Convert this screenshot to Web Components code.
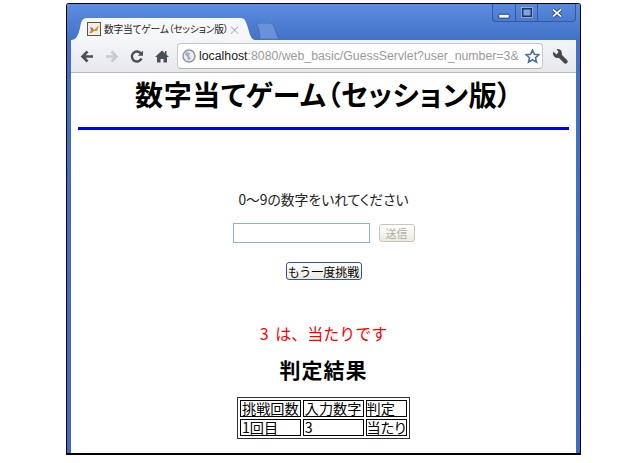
<!DOCTYPE html>
<html lang="ja">
<head>
<meta charset="utf-8">
<title>数字当てゲーム</title>
<style>
html, body { margin: 0; padding: 0; background: #fff; height: 463px; overflow: hidden; }
body { font-family: "Liberation Sans", "Noto Sans CJK JP", sans-serif; }
</style>
</head>
<body>
<browser-window>
	<browser-tabs slot="tabs" tabtitle="数字当てゲーム（セッション版）"></browser-tabs>
	<browser-toolbar slot="toolbar" host-name="localhost" rest=":8080/web_basic/GuessServlet?user_number=3&"></browser-toolbar>
	<guess-page></guess-page>
</browser-window>

<template id="window-tpl">
	<style>
		:host { display: block; box-sizing: border-box; width: 515px; height: 452px; margin: 3px 0 0 66px;
			border: 1px solid #000; border-bottom-width: 2px; border-radius: 3px 3px 0 0; position: relative; overflow: hidden; }
		.frame { display: flex; flex-direction: column; height: 100%; padding: 0 4px; box-sizing: border-box;
			background: linear-gradient(#5c8de0 0, #4072c8 36px, #3d6cc0 100%); }
		.content { flex: 1; background: #fff; min-height: 0; }
		.caption { position: absolute; top: 0; right: 4px; display: flex; height: 17px; border: 1px solid #33589c; border-top: 0; border-radius: 0 0 4px 4px; background: linear-gradient(#5a8ade, #4a7bd0); }
		.caption span { display: flex; align-items: center; justify-content: center; border-left: 1px solid #33589c; }
		.caption span:first-child { border-left: 0; }
		.caption .a { width: 22px; } .caption .b { width: 21px; } .caption .c { width: 37px; }
	</style>
	<div class="frame">
		<slot name="tabs"></slot>
		<slot name="toolbar"></slot>
		<div class="content"><slot></slot></div>
	</div>
	<div class="caption">
		<span class="a"><svg width="12" height="12"><rect x=".7" y="7.200" width="10.600" height="4" rx="1.200" fill="#f2f5fb" stroke="#243f70"/></svg></span>
		<span class="b"><svg width="12" height="11"><rect x="1.500" y="1.500" width="9" height="8" fill="#7ea4e4" stroke="#20365e" stroke-width="2"/><rect x=".5" y=".5" width="11" height="10" fill="none" stroke="#cfdcf2" stroke-width=".6"/></svg></span>
		<span class="c"><svg width="12" height="10"><path d="M2 1.500l8 7M10 1.500l-8 7" stroke="#20365e" stroke-width="3.400"/><path d="M2 1.500l8 7M10 1.500l-8 7" stroke="#f2f5fb" stroke-width="1.800"/></svg></span>
	</div>
</template>

<template id="tabs-tpl">
	<style>
		:host { display: flex; align-items: flex-end; height: 36px; box-sizing: border-box; }
		.tab { position: relative; display: flex; align-items: center; width: 184px; height: 22px; padding: 0 15px 0 16px; box-sizing: border-box;
			font: 9.700px "Noto Sans CJK JP", sans-serif; font-feature-settings: "palt"; letter-spacing: -.15px; color: #222; white-space: nowrap; }
		.tab > .shape { position: absolute; left: 0; top: 0; }
		.tab > :not(.shape) { position: relative; flex: none; }
		.t { margin-left: 3px; }
		.x { color: #aab0b8; font-size: 12px; margin-left: auto !important; }
		.new { display: block; margin-bottom: 1px; }
	</style>
	<div class="tab">
		<svg class="shape" width="184" height="22"><path d="M0 22C5 22 7 18 9 10 10 4 11 0 16 0H170C174 0 175 4 177 10 179 18 181 22 184 22Z" fill="#f6f7f9"/></svg>
		<svg width="14" height="14" viewBox="0 0 14 14"><rect x=".5" y=".5" width="13" height="13" fill="#f4efe2" stroke="#555"/><path d="M2 11l3-4 2 1 5-5-2 6-3 0-2 2z" fill="#d9932e"/><path d="M3 5l3 1 1 3-3-1z" fill="#8b8068"/></svg>
		<span class="t"></span>
		<span class="x">×</span>
	</div>
	<svg class="new" width="24" height="16"><path d="M1 0H15C18 0 19 3 21 9 22 13 23 15 24 16H5C5 10 3 3 1 0Z" fill="#6b92d8" stroke="#3f69b4" stroke-width=".8"/></svg>
</template>

<template id="toolbar-tpl">
	<style>
		:host { display: flex; align-items: center; height: 33px; box-sizing: border-box; padding: 0 8px 0 9px;
			background: linear-gradient(#f4f5f8, #e6e8ed); border-bottom: 1px solid #b4b8c0; }
		svg { display: block; flex: none; }
		.nav { display: flex; align-items: center; margin-right: 8px; }
		.nav svg + svg { margin-left: 11px; }
		.omni { flex: 1; display: flex; align-items: center; height: 26px; box-sizing: border-box; background: #fff; border: 1px solid #c4c7cd; border-bottom-color: #aeb2b9; border-radius: 4px; padding: 0 2px 0 4px; font: 12.300px "Liberation Sans", sans-serif; color: #9a9a9a; white-space: nowrap; }
		.omni b { font-weight: normal; color: #222; }
		.url { flex: 1; margin-left: 3px; }
		.wrench { margin: 0 0 0 9px; }
	</style>
	<div class="nav">
		<svg width="14" height="13" viewBox="0 0 14 13"><path d="M2.500 6.500H13M7.500 1.500l-5 5 5 5" fill="none" stroke="#4a4f57" stroke-width="2.600"/></svg>
		<svg width="14" height="13" viewBox="0 0 14 13"><path d="M11.500 6.500H1M6.500 1.500l5 5-5 5" fill="none" stroke="#c6cad0" stroke-width="2.600"/></svg>
		<svg width="14" height="13" viewBox="0 0 14 13"><path d="M11 3.600A5 5 0 1 0 11.500 8.500" fill="none" stroke="#4a4f57" stroke-width="2.400"/><path d="M13 .5v5.200H7.800z" fill="#4a4f57"/></svg>
		<svg width="14" height="13" viewBox="0 0 14 13"><path d="M7 .5L0 7h2v5.500h3.500V9h3v3.500H12V7h2l-2.500-2.300V1H10v2.300z" fill="#4a4f57"/></svg>
	</div>
	<div class="omni">
		<svg width="14" height="14" viewBox="0 0 14 14"><circle cx="7" cy="7" r="6" fill="#e8ecf2" stroke="#8c939c" stroke-width="1.400"/><path d="M4 3l4 1-1 3 2 3-3 1-1-4-2-1z" fill="#a6adb6"/></svg>
		<span class="url"><b class="h"></b><span class="r"></span></span>
		<svg width="15" height="15" viewBox="0 0 16 16"><path d="M8 1.200l2 4.400 4.800.5-3.600 3.200 1 4.700L8 11.500l-4.200 2.500 1-4.700L1.200 6.100 6 5.600z" fill="#fff" stroke="#4d6f9e" stroke-width="1.700"/></svg>
	</div>
	<svg class="wrench" width="16" height="16" viewBox="0 0 16 16"><path d="M6.500 6.500L13.500 13.500" stroke="#45494f" stroke-width="4.200" stroke-linecap="round"/><circle cx="5.500" cy="5.500" r="4.500" fill="#45494f"/><path d="M0 2.500V0H4L6.500 4 4.500 6.500z" fill="#eceef2"/></svg>
</template>

<template id="page-tpl">
	<style>
		:host { display: flex; flex-direction: column; align-items: center; padding: 0 7px; color: #000; font-family: "Noto Sans CJK JP", sans-serif; }
		h1 { margin: 0; font-size: 28px; line-height: 42px; font-weight: bold; letter-spacing: .6px; white-space: nowrap; font-feature-settings: "palt"; }
		hr { align-self: stretch; height: 3px; margin: 12px 0 0; border: 0; background: #0000f5; }
		.ask { margin: 60px 0 0; font-size: 13.800px; line-height: 18px; color: #222; font-feature-settings: "palt"; }
		.row { display: flex; align-items: center; gap: 9px; margin-top: 15px; height: 20px; }
		input { box-sizing: border-box; width: 137px; height: 20px; padding: 0; border: 1px solid #8fb0d0; background: #fff; }
		button { font: 11px "Noto Sans CJK JP", sans-serif; padding: 0; border-radius: 3px; background: linear-gradient(#fff, #ece9df); }
		.send { width: 36px; height: 18px; color: #b0aea4; border: 1px solid #c9c7ba; }
		.again { width: 76px; height: 18px; margin-top: 19px; color: #000; border: 1px solid #2c5a92; font-size: 12px; }
		.hit { margin: 43px 0 0; font-size: 16px; line-height: 20px; color: #f00; word-spacing: 3px; }
		h2 { margin: 13px 0 0; font-size: 21px; line-height: 26px; font-weight: bold; letter-spacing: 1px; }
		table { margin-top: 15px; border: 1px solid #333; border-spacing: 2px; border-collapse: separate; font-size: 14.200px; line-height: 15px; font-feature-settings: "palt"; }
		td { border: 1px solid #000; padding: 0 1px; height: 15px; white-space: nowrap; }
		td:last-child { padding: 0; }
	</style>
	<h1>数字当てゲーム（セッション版）</h1>
	<hr>
	<p class="ask">0〜9の数字をいれてください</p>
	<div class="row"><input type="text"><button class="send" disabled>送信</button></div>
	<button class="again">もう一度挑戦</button>
	<p class="hit">3 は、当たりです</p>
	<h2>判定結果</h2>
	<table>
		<tr><td>挑戦回数</td><td>入力数字</td><td>判定</td></tr>
		<tr><td>1回目</td><td>3</td><td>当たり</td></tr>
	</table>
</template>

<script>
function stamp(el, id) {
	let root = el.attachShadow({mode: 'open'});
	root.appendChild(document.getElementById(id).content.cloneNode(true));
	return root;
}
class BrowserWindow extends HTMLElement {
	constructor(){ super(); stamp(this, 'window-tpl'); }
}
class BrowserTabs extends HTMLElement {
	constructor(){ super(); stamp(this, 'tabs-tpl'); }
	connectedCallback(){ this.shadowRoot.querySelector('.t').textContent = this.getAttribute('tabtitle'); }
}
class BrowserToolbar extends HTMLElement {
	constructor(){ super(); stamp(this, 'toolbar-tpl'); }
	connectedCallback(){
		this.shadowRoot.querySelector('.h').textContent = this.getAttribute('host-name');
		this.shadowRoot.querySelector('.r').textContent = this.getAttribute('rest');
	}
}
class GuessPage extends HTMLElement {
	constructor(){ super(); stamp(this, 'page-tpl'); }
}
customElements.define('browser-window', BrowserWindow);
customElements.define('browser-tabs', BrowserTabs);
customElements.define('browser-toolbar', BrowserToolbar);
customElements.define('guess-page', GuessPage);
</script>
</body>
</html>
